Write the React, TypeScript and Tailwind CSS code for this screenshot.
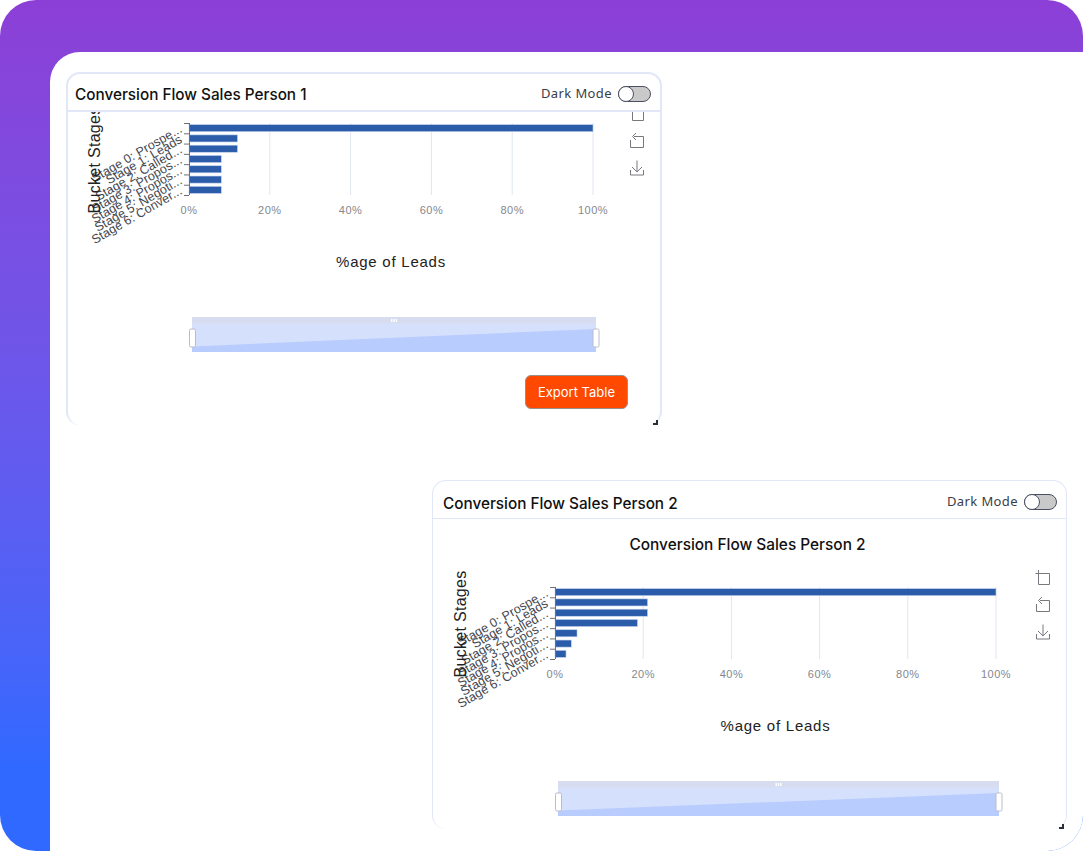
import React from 'react';

const stages = [
  'Stage 0: Prospe...',
  'Stage 1: Leads',
  'Stage 2: Called...',
  'Stage 3: Propos...',
  'Stage 4: Propos...',
  'Stage 5: Negoti...',
  'Stage 6: Conver...',
];
const ticks = [0, 20, 40, 60, 80, 100];

type ChartProps = {
  values: number[];
  x0: number;
  plotWidth: number;
  top: number;
  height: number;
  iconX: number;
  title?: string;
};

// echarts style horizontal bar, coordinates are relative to the card body
const FunnelChart = ({ values, x0, plotWidth, top, height, iconX, title }: ChartProps) => {
  const plotH = 72;
  const band = plotH / stages.length;
  const sliderX = x0 + 3;
  const sliderY = top + 194;

  return (
    <svg className="block w-full font-['Liberation_Sans',sans-serif]" height={height}>
      {title && (
        <text x={x0 + plotWidth / 2 - 28} y={top - 37} textAnchor="middle" fontSize="15.4" fill="#111" className="font-['Inter',sans-serif] font-medium">
          {title}
        </text>
      )}

      {/* grid */}
      {ticks.slice(1).map((t) => (
        <line key={t} x1={x0 + (plotWidth * t) / 100} x2={x0 + (plotWidth * t) / 100} y1={top} y2={top + plotH} stroke="#e0e6f1" />
      ))}

      {/* bars */}
      {values.map((v, i) => (
        <rect
          key={i}
          x={x0}
          y={top + band * i + 1.6}
          width={(plotWidth * v) / 100}
          height={band - 3.2}
          fill="#2a5caa"
          stroke="#c5d3ee"
          strokeWidth="0.6"
        />
      ))}

      {/* y axis */}
      <line x1={x0 + 0.5} x2={x0 + 0.5} y1={top} y2={top + plotH} stroke="#6e7079" />
      {stages.map((_, i) => (
        <line key={i} x1={x0 - 5} x2={x0} y1={top + band * i + 0.5} y2={top + band * i + 0.5} stroke="#6e7079" />
      ))}
      <line x1={x0 - 5} x2={x0} y1={top + plotH + 0.5} y2={top + plotH + 0.5} stroke="#6e7079" />

      {stages.map((s, i) => (
        <text
          key={s}
          textAnchor="end"
          fontSize="12.5"
          letterSpacing="0.1"
          fill="#44464d"
          transform={`translate(${x0 - 6} ${top + band * i + 8.5}) rotate(-30)`}
        >
          {s}
        </text>
      ))}

      <text
        textAnchor="middle"
        fontSize="16"
        fill="#222"
        letterSpacing="0.3"
        transform={`translate(${x0 - 89} ${top + 37}) rotate(-90)`}
      >
        Bucket Stages
      </text>

      {/* x axis */}
      {ticks.map((t) => (
        <text key={t} x={x0 + (plotWidth * t) / 100} y={top + 91} textAnchor="middle" fontSize="11" letterSpacing="0.5" fill="#85878e">
          {t}%
        </text>
      ))}
      <text x={x0 + plotWidth / 2} y={top + 143.5} textAnchor="middle" fontSize="15" letterSpacing="0.75" fill="#222">
        %age of Leads
      </text>

      {/* toolbox */}
      <g fill="none" stroke="#77797f" strokeWidth="1" transform={`translate(${iconX} ${top - 9})`}>
        <path d="M-7.5 -4.5H6.5V6.5H-4.5V-8" />
      </g>
      <g fill="none" stroke="#77797f" strokeWidth="1" transform={`translate(${iconX} ${top + 18})`}>
        <path d="M-3 -4.5H6.5V6.5H-6.5V-1" />
        <path d="M-1 -8L-4.5 -4.5L-1 -1" />
      </g>
      <g fill="none" stroke="#77797f" strokeWidth="1" transform={`translate(${iconX} ${top + 45})`}>
        <path d="M0 -7.5V4M-5 -1L0 4L5 -1" />
        <path d="M-6.5 2V7H6.5V2" />
      </g>

      {/* data zoom slider */}
      <rect x={sliderX} y={sliderY} width={plotWidth} height={35} fill="#d5e0fd" />
      <polygon
        points={`${sliderX},${sliderY + 29.5} ${sliderX + plotWidth},${sliderY + 12} ${sliderX + plotWidth},${sliderY + 35} ${sliderX},${sliderY + 35}`}
        fill="#b8ccfd"
      />
      <rect x={sliderX} y={sliderY} width={plotWidth} height={6.5} fill="#d7ddee" />
      <g fill="#fff">
        <rect x={sliderX + plotWidth / 2 - 3} y={sliderY + 2} width={1.4} height={3} />
        <rect x={sliderX + plotWidth / 2 - 0.7} y={sliderY + 2} width={1.4} height={3} />
        <rect x={sliderX + plotWidth / 2 + 1.6} y={sliderY + 2} width={1.4} height={3} />
      </g>
      <rect x={sliderX - 2.5} y={sliderY + 12} width={6} height={18} rx="1.5" fill="#fff" stroke="#b9bdc9" />
      <rect x={sliderX + plotWidth - 3} y={sliderY + 12} width={6} height={18} rx="1.5" fill="#fff" stroke="#b9bdc9" />
    </svg>
  );
};

const DarkToggle = () => (
  <div className="flex items-center gap-[6px]">
    <span className="font-['Noto_Sans',sans-serif] text-[13px] tracking-[0.4px] text-[#3a3d45]">Dark Mode</span>
    <span className="relative h-4 w-[33px] rounded-full border border-[#4a5060] bg-[#c9c9c9]">
      <span className="absolute -left-px -top-px h-4 w-4 rounded-full border border-[#4a5060] bg-white" />
    </span>
  </div>
);

type CardProps = { title: string; className: string; headerClass: string; titleClass: string; children: React.ReactNode };

const Card = ({ title, className, headerClass, titleClass, children }: CardProps) => (
  <div className={`relative flex flex-col rounded-[14px] border-b-0 border-[#e2e7f8] bg-white ${className}`}>
    <div className={`flex h-[38px] shrink-0 items-center justify-between border-[#e2e7f8] pr-[9px] ${headerClass}`}>
      <h3 className={`font-['Inter',sans-serif] text-[15.3px] font-medium text-[#111] ${titleClass}`}>{title}</h3>
      <DarkToggle />
    </div>
    <div className="min-h-0 flex-1 overflow-hidden">{children}</div>
    <span className="absolute bottom-0 right-[2px] h-[5px] w-[5px] border-b-2 border-r-2 border-[#2b2f3a]" />
  </div>
);

export default function App() {
  return (
    <div className="h-[851px] w-full bg-white">
      <div className="flex h-full flex-col rounded-[36px] bg-gradient-to-b from-[#8c3fd6] to-[#3069ff] to-90% pl-[50px] pt-[52px]">
        <div className="flex-1 rounded-br-[36px] rounded-tl-[30px] bg-white pl-4 pt-5">
          <Card
            title="Conversion Flow Sales Person 1"
            className="h-[353px] w-[596px] border-2"
            headerClass="border-b-2 pl-[7px] pt-1"
            titleClass="mt-[2px]"
          >
            <FunnelChart values={[100, 12, 12, 8, 8, 8, 8]} x0={121} plotWidth={404} top={11} height={263} iconX={569} />
            <div className="flex justify-end pr-[32px]">
              <button className="h-[34px] w-[103px] rounded-md border border-[#9a8f8a] bg-[#ff4800] pt-px font-['Inter',sans-serif] text-[13px] text-white">
                Export Table
              </button>
            </div>
          </Card>
          <Card
            title="Conversion Flow Sales Person 2"
            className="ml-[366px] mt-[55px] h-[349px] w-[635px] border"
            headerClass="border-b pl-[10px] pt-[5px]"
            titleClass="mt-1"
          >
            <FunnelChart
              values={[100, 21, 21, 18.7, 5, 3.7, 2.5]}
              x0={122}
              plotWidth={441}
              top={68}
              height={310}
              iconX={610}
              title="Conversion Flow Sales Person 2"
            />
          </Card>
        </div>
      </div>
    </div>
  );
}
